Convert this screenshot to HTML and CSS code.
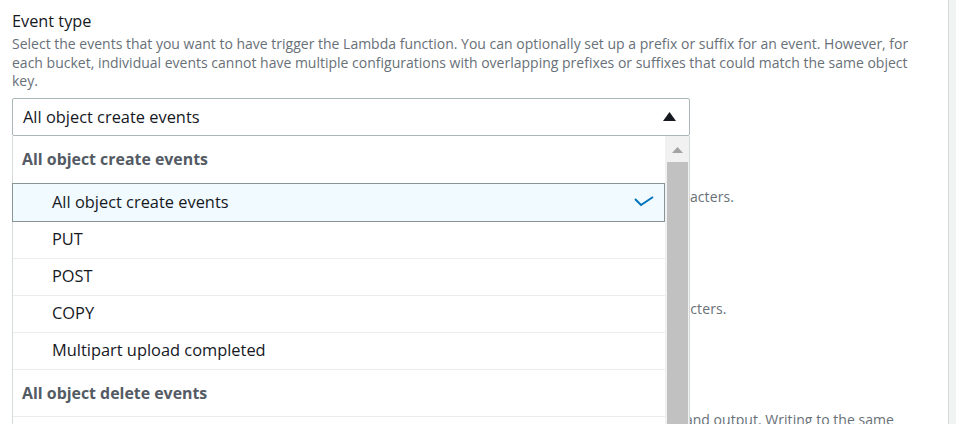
FILE: index.html
```html
<!DOCTYPE html>
<html lang="en">
<head>
<meta charset="utf-8">
<title>Add trigger</title>
<link rel="stylesheet" href="styles.css">
</head>
<body>
<div class="panel">
  <div class="field">
    <div class="label">Event type</div>
    <div class="desc">Select the events that you want to have trigger the Lambda function. You can optionally set up a prefix or suffix for an event. However, for each bucket, individual events cannot have multiple configurations with overlapping prefixes or suffixes that could match the same object key.</div>
    <div class="select">
      <div class="trigger">
        <span class="value">All object create events</span>
        <svg class="caret" width="13" height="9" viewBox="0 0 13 9"><polygon points="0,9 6.5,0 13,9" fill="#16191f"/></svg>
      </div>
      <div class="dropdown">
        <div class="list">
          <div class="group">All object create events</div>
          <div class="opt selected">
            <span>All object create events</span>
            <svg class="check" width="20" height="12" viewBox="0 0 20 12"><polyline points="1,3 7,9 19,1" fill="none" stroke="#0073bb" stroke-width="2"/></svg>
          </div>
          <div class="opt">PUT</div>
          <div class="opt">POST</div>
          <div class="opt">COPY</div>
          <div class="opt">Multipart upload completed</div>
          <div class="group">All object delete events</div>
          <div class="opt">Permanently deleted</div>
        </div>
        <div class="scrollbar">
          <svg class="up" width="11" height="6" viewBox="0 0 11 6"><polygon points="0,6 5.5,0 11,6" fill="#a3a3a3"/></svg>
          <div class="thumb"></div>
        </div>
      </div>
    </div>
  </div>

  <div class="field field-prefix">
    <div class="label">Prefix - <i>optional</i></div>
    <div class="desc desc-wide">Enter a single optional prefix to limit the notifications to objects with keys that start with matching characters.</div>
    <div class="input">e.g. images/</div>
  </div>

  <div class="field field-suffix">
    <div class="label">Suffix - <i>optional</i></div>
    <div class="desc desc-wide">Enter a single optional suffix to limit the notifications to objects with keys that end with matching characters.</div>
    <div class="input">e.g. .jpg</div>
  </div>

  <div class="field field-last">
    <div class="label">Recursive invocation</div>
    <div class="desc desc-loose">If your function writes objects to an S3 bucket, ensure that you are using different S3 buckets for input and output. Writing to the same bucket increases the risk of creating a recursive invocation, which can result in increased Lambda usage and increased costs.</div>
  </div>
</div>
</body>
</html>
```

FILE: styles.css
```css
html, body {
  margin: 0;
  height: 100%;
  overflow: hidden;
}

body {
  background: #f2f3f3;
  font-family: "Open Sans", "Noto Sans", sans-serif;
  color: #16191f;
}

.panel {
  width: 949px;
  height: 424px;
  box-sizing: border-box;
  background: #fff;
  border-right: 1px solid #d5dbdb;
  padding: 10px 20px 0 12px;
  overflow: hidden;
}

.field.field-prefix {
  margin-top: 27px;
}

.field.field-suffix {
  margin-top: 24px;
}

.field.field-last {
  margin-top: 22px;
}

.label {
  font-size: 16.3px;
  line-height: 22px;
  color: #16191f;
}

.desc {
  font-size: 14px;
  line-height: 18.5px;
  color: #687078;
  margin-top: 3px;
}

.desc-wide {
  letter-spacing: 0.085px;
}

.desc-loose {
  letter-spacing: 0.035px;
}

.select {
  position: relative;
  width: 678px;
  margin-top: 7px;
}

.trigger,
.input {
  height: 38px;
  box-sizing: border-box;
  border: 1px solid #aab7b8;
  border-radius: 2px;
  display: flex;
  align-items: center;
  padding: 0 13px 1px 10px;
  font-size: 16.4px;
  background: #fff;
}

.input {
  width: 678px;
  margin-top: 7px;
  color: #879596;
}

.trigger .value {
  flex: 1;
}

.caret {
  display: block;
}

.dropdown {
  position: absolute;
  top: 100%;
  left: 0;
  width: 678px;
  height: 300px;
  box-sizing: border-box;
  border-left: 1px solid #d5dbdb;
  border-right: 1px solid #d5dbdb;
  background: #fff;
  display: flex;
  z-index: 10;
}

.list {
  flex: 1;
  min-width: 0;
}

.group {
  height: 47px;
  box-sizing: border-box;
  padding-left: 9px;
  display: flex;
  align-items: center;
  font-size: 15.9px;
  font-weight: 700;
  color: #545b64;
}

.list .group:not(:first-child) {
  border-bottom: 1px solid #eaeded;
}

.opt {
  height: 37px;
  box-sizing: border-box;
  border-bottom: 1px solid #eaeded;
  padding: 0 10px 2px 39px;
  display: flex;
  align-items: center;
  justify-content: space-between;
  font-size: 16.4px;
  color: #16191f;
}

.opt.selected {
  height: 39px;
  margin-left: -1px;
  padding-left: 39px;
  border: 1px solid #879596;
  background: #f1faff;
}

.check {
  display: block;
  margin-top: 2px;
}

.scrollbar {
  width: 24px;
  background: #f1f1f1;
  display: flex;
  flex-direction: column;
  align-items: center;
}

.scrollbar .up {
  display: block;
  margin-top: 11px;
}

.thumb {
  width: 21px;
  margin-top: 9px;
  flex: 1;
  background: #c1c1c1;
}
```
